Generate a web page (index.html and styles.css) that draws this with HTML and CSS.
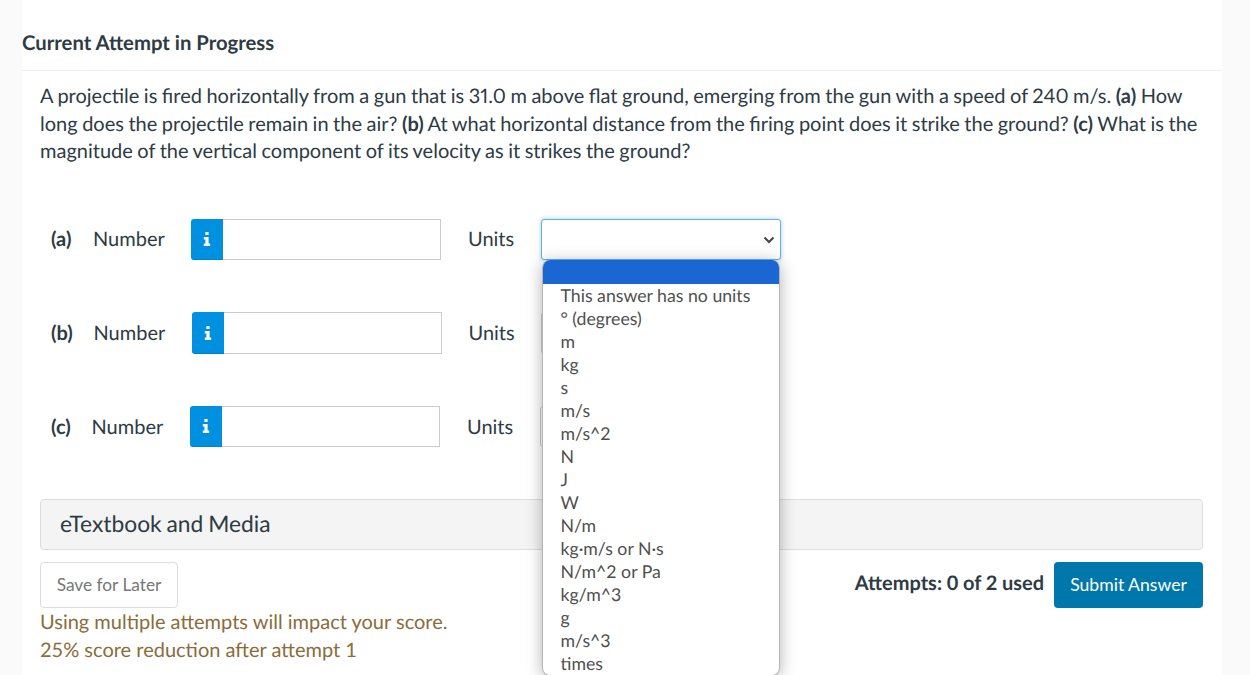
FILE: index.html
```html
<!DOCTYPE html>
<html lang="en">
<head>
<meta charset="utf-8">
<title>Current Attempt in Progress</title>
<link rel="stylesheet" href="styles.css">
</head>
<body>
<main class="card">
  <h1 class="title">Current Attempt in Progress</h1>
  <div class="content">
    <p class="question">A projectile is fired horizontally from a gun that is 31.0 m above flat ground, emerging from the gun with a speed of 240 m/s. <b>(a)</b> How long does the projectile remain in the air? <b>(b)</b> At what horizontal distance from the firing point does it strike the ground? <b>(c)</b> What is the magnitude of the vertical component of its velocity as it strikes the ground?</p>

    <div class="row row-a">
      <b class="part">(a)</b><span class="lbl">Number</span>
      <span class="info"><svg viewBox="0 0 10 14" width="8" height="14" preserveAspectRatio="none"><path d="M3 0h4v3H3zM1 5h6v6.500h2V14H1v-2.500h2V7.500H1z" fill="#fff"/></svg></span>
      <span class="field"></span>
      <span class="lbl units">Units</span>
      <div class="select focus">
        <svg class="chev" viewBox="0 0 12 8" width="12" height="8"><path d="M1.500 1.500 6 6l4.500-4.500" fill="none" stroke="#444" stroke-width="2"/></svg>
        <ul class="menu">
          <li class="sel">&nbsp;</li>
          <li>This answer has no units</li>
          <li>° (degrees)</li>
          <li>m</li>
          <li>kg</li>
          <li>s</li>
          <li>m/s</li>
          <li>m/s^2</li>
          <li>N</li>
          <li>J</li>
          <li>W</li>
          <li>N/m</li>
          <li>kg·m/s or N·s</li>
          <li>N/m^2 or Pa</li>
          <li>kg/m^3</li>
          <li>g</li>
          <li>m/s^3</li>
          <li>times</li>
        </ul>
      </div>
    </div>

    <div class="row row-b">
      <b class="part">(b)</b><span class="lbl">Number</span>
      <span class="info"><svg viewBox="0 0 10 14" width="8" height="14" preserveAspectRatio="none"><path d="M3 0h4v3H3zM1 5h6v6.500h2V14H1v-2.500h2V7.500H1z" fill="#fff"/></svg></span>
      <span class="field"></span>
      <span class="lbl units">Units</span>
      <div class="select"></div>
    </div>

    <div class="row row-c">
      <b class="part">(c)</b><span class="lbl">Number</span>
      <span class="info"><svg viewBox="0 0 10 14" width="8" height="14" preserveAspectRatio="none"><path d="M3 0h4v3H3zM1 5h6v6.500h2V14H1v-2.500h2V7.500H1z" fill="#fff"/></svg></span>
      <span class="field"></span>
      <span class="lbl units">Units</span>
      <div class="select"></div>
    </div>

    <div class="panel">eTextbook and Media</div>

    <div class="footer">
      <div class="left">
        <button class="btn save" type="button">Save for Later</button>
        <p class="warn">Using multiple attempts will impact your score.<br>25% score reduction after attempt 1</p>
      </div>
      <div class="right">
        <span class="attempts">Attempts: 0 of 2 used</span>
        <button class="btn submit" type="button">Submit Answer</button>
      </div>
    </div>
  </div>
</main>
</body>
</html>
```

FILE: styles.css
```css
* { box-sizing: border-box; }
html, body { height: 100%; overflow: hidden; }
body {
  margin: 0;
  background: #fafafa;
  font-family: Lato, "Open Sans", sans-serif;
  color: #2d3b45;
  text-rendering: geometricPrecision;
}
.card {
  margin-left: 22px;
  width: 1200px;
  height: 675px;
  background: #fff;
}
.title {
  margin: 0;
  height: 71px;
  padding-top: 31px;
  font-size: 20.300px;
  line-height: 24px;
  font-weight: 700;
  border-bottom: 1px solid #eee;
}
.content { padding: 0 19px 0 18px; }
.question {
  margin: 0;
  padding-top: 12px;
  font-size: 20px;
  line-height: 27.500px;
  word-spacing: -0.6px;
  font-variant-numeric: proportional-nums;
}
.row {
  display: flex;
  align-items: center;
  height: 41px;
  font-size: 20px;
}
.row-a { margin-top: 53px; padding-left: 11px; }
.row-b { margin-top: 52.500px; padding-left: 11px; height: 42px; }
.row-c { margin-top: 52px; padding-left: 11px; }
.part { width: 42px; }
.row-b .part { width: 42.500px; }
.row-c .part { width: 40.500px; }
.lbl { width: 98px; }
.row-b .lbl, .row-c .lbl { width: 98.500px; }
.info {
  width: 32px;
  height: 100%;
  background: #0090e0;
  border-bottom: 1px solid #0082cc;
  border-radius: 3px 0 0 3px;
  display: flex;
  align-items: center;
  justify-content: center;
  flex: none;
}
.field {
  width: 218px;
  height: 100%;
  border: 1px solid #ccc;
  border-left: 0;
  background: #fff;
}
.row .units { margin-left: 27px; width: 73px; }
.row-b .units { margin-left: 26.500px; width: 72.500px; }
.select {
  position: relative;
  width: 238px;
  height: 100%;
  border: 1px solid #ccc;
  border-radius: 3px;
  background: #fff;
}
.select.focus {
  width: 240px;
  border-color: #66afe9;
  box-shadow: 0 0 4px rgba(102, 175, 233, .6);
}
.chev { position: absolute; right: 5px; top: 16px; }
.menu {
  position: absolute;
  z-index: 5;
  left: 0;
  top: 40px;
  width: 238px;
  height: 416px;
  margin: 0;
  padding: 0;
  list-style: none;
  overflow: hidden;
  background: #fff;
  border: 1px solid #b5b5b5;
  border-top: 0;
  border-radius: 8px;
  box-shadow: 0 2px 16px rgba(0, 0, 0, .3);
  font-size: 17.700px;
  line-height: 23px;
  color: #4f4f4f;
}
.menu li { padding-left: 17.500px; height: 23px; }
.menu .sel { background: #1a66d2; height: 24px; }
.panel {
  margin-top: 52px;
  height: 51px;
  padding: 0 19px 3px;
  display: flex;
  align-items: center;
  background: #f4f4f4;
  border: 1px solid #ddd;
  border-radius: 4px;
  font-size: 22.800px;
  word-spacing: -1px;
}
.footer {
  display: flex;
  justify-content: space-between;
  margin-top: 12px;
}
.btn {
  font-family: inherit;
  height: 46px;
  padding-bottom: 3px;
  border-radius: 4px;
}
.save {
  width: 138px;
  font-size: 17.300px;
  background: #fff;
  border: 1px solid #ddd;
  color: #777;
}
.warn {
  margin: 0;
  font-size: 20px;
  line-height: 28px;
  color: #8a6d3b;
}
.right { display: flex; align-items: flex-start; }
.attempts {
  font-size: 20px;
  font-weight: 700;
  margin-right: 10px;
  margin-top: 9px;
  word-spacing: -0.2px;
}
.submit {
  width: 149px;
  font-size: 17.600px;
  background: #0077aa;
  border: 0;
  color: #fff;
}
```
